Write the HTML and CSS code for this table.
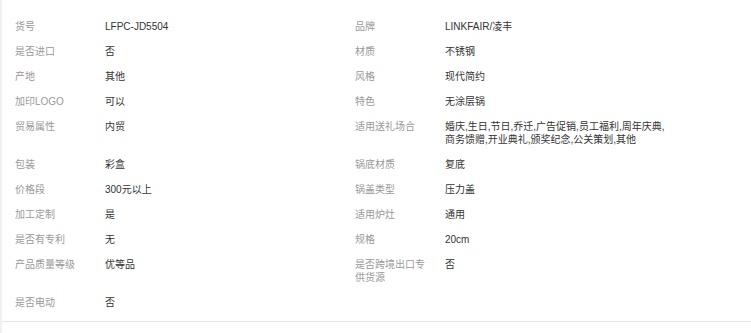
FILE: index.html
```html
<!DOCTYPE html>
<html lang="zh-CN">
<head>
<meta charset="utf-8">
<title>商品参数</title>
<link rel="stylesheet" href="styles.css">
</head>
<body>
<div class="panel">
  <div class="params">
    <div class="item"><span class="label">货号</span><span class="value">LFPC-JD5504</span></div>
    <div class="item"><span class="label">品牌</span><span class="value">LINKFAIR/凌丰</span></div>
    <div class="item"><span class="label">是否进口</span><span class="value">否</span></div>
    <div class="item"><span class="label">材质</span><span class="value">不锈钢</span></div>
    <div class="item"><span class="label">产地</span><span class="value">其他</span></div>
    <div class="item"><span class="label">风格</span><span class="value">现代简约</span></div>
    <div class="item"><span class="label">加印LOGO</span><span class="value">可以</span></div>
    <div class="item"><span class="label">特色</span><span class="value">无涂层锅</span></div>
    <div class="item"><span class="label">贸易属性</span><span class="value">内贸</span></div>
    <div class="item"><span class="label">适用送礼场合</span><span class="value">婚庆,生日,节日,乔迁,广告促销,员工福利,周年庆典,商务馈赠,开业典礼,颁奖纪念,公关策划,其他</span></div>
    <div class="item"><span class="label">包装</span><span class="value">彩盒</span></div>
    <div class="item"><span class="label">锅底材质</span><span class="value">复底</span></div>
    <div class="item"><span class="label">价格段</span><span class="value">300元以上</span></div>
    <div class="item"><span class="label">锅盖类型</span><span class="value">压力盖</span></div>
    <div class="item"><span class="label">加工定制</span><span class="value">是</span></div>
    <div class="item"><span class="label">适用炉灶</span><span class="value">通用</span></div>
    <div class="item"><span class="label">是否有专利</span><span class="value">无</span></div>
    <div class="item"><span class="label">规格</span><span class="value">20cm</span></div>
    <div class="item"><span class="label">产品质量等级</span><span class="value">优等品</span></div>
    <div class="item"><span class="label">是否跨境出口专供货源</span><span class="value">否</span></div>
    <div class="item"><span class="label">是否电动</span><span class="value">否</span></div>
  </div>
</div>
</body>
</html>
```

FILE: styles.css
```css
html, body {
  margin: 0;
  padding: 0;
}
body {
  background: #f0f0f0;
  font-family: "Liberation Sans", "Noto Sans CJK SC", sans-serif;
  font-size: 10px;
  line-height: 13px;
  color: #333;
}
.panel {
  margin-left: 2px;
  background: #fff;
  min-height: 100vh;
}
.params {
  display: grid;
  grid-template-columns: 340px 340px;
  padding: 14px 0 6px 13px;
  border-bottom: 1px solid #e6e6e6;
}
.item {
  display: flex;
  padding: 6px 0;
}
.label {
  flex: 0 0 75px;
  margin-right: 15px;
  color: #999;
}
.value {
  flex: 0 0 225px;
  color: #333;
}
```
